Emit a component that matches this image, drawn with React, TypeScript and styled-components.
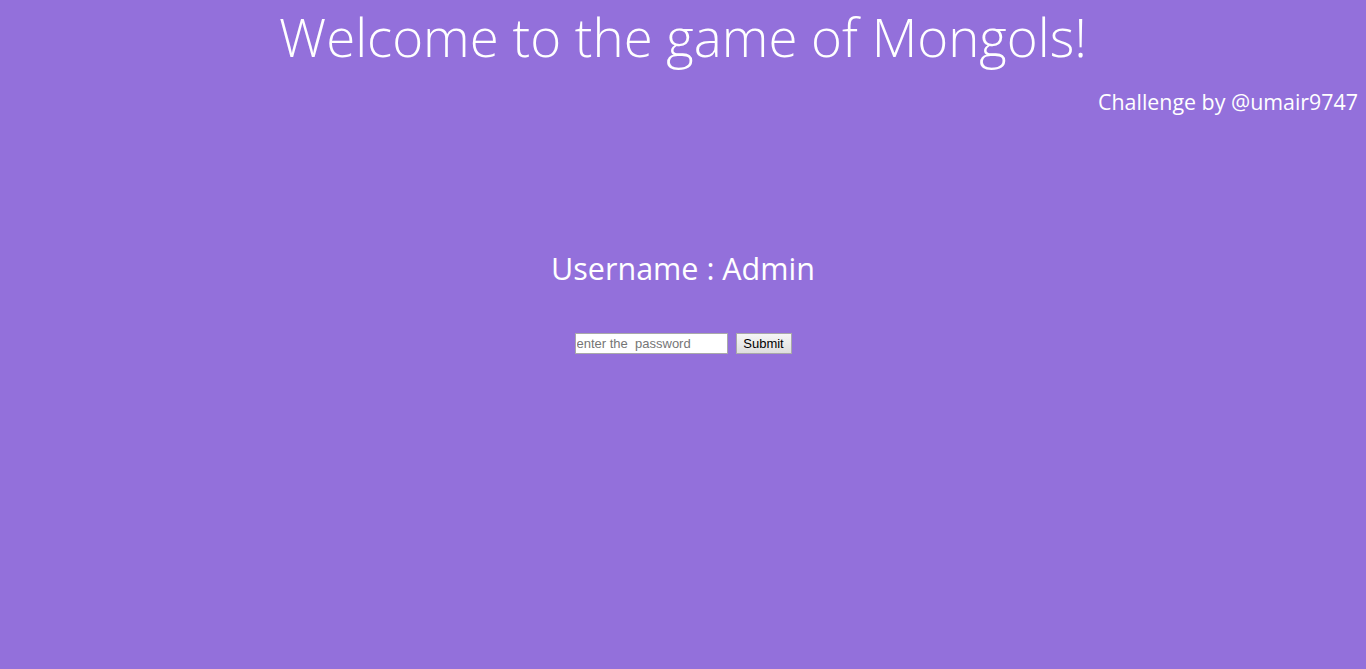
import React from "react";
import styled, { createGlobalStyle } from "styled-components";

const Global = createGlobalStyle`
  html, body { margin: 0; padding: 0; background: #9370db; }
  body { min-height: 669px; }
`;

const Page = styled.div`
  min-height: 669px;
  background: #9370db;
  color: #fff;
  font-family: "Open Sans", "Noto Sans", sans-serif;
  display: flex;
  flex-direction: column;
  padding: 0 8px;
  box-sizing: border-box;
`;

const Title = styled.h1`
  margin: 4px 0 0;
  font-size: 52.8px;
  font-weight: 300;
  line-height: 66px;
  text-align: center;
`;

const Credit = styled.div`
  margin-top: 18px;
  font-size: 21.4px;
  font-weight: 400;
  line-height: 28px;
  text-align: right;
`;

const Login = styled.div`
  margin-top: 130px;
  display: flex;
  flex-direction: column;
  align-items: center;
`;

const UserLine = styled.h2`
  margin: 0;
  font-size: 30.5px;
  font-weight: 400;
  line-height: 44px;
`;

const Form = styled.form`
  margin-top: 43px;
  display: flex;
  gap: 8px;
  align-items: center;
`;

const Input = styled.input`
  width: 153px;
  height: 21px;
  box-sizing: border-box;
  border: 1px solid #a9a9a9;
  padding: 1px 1px;
  font-family: "Liberation Sans", Arial, sans-serif;
  font-size: 13px;
  background: #fff;
  &::placeholder { color: #757575; }
`;

const Button = styled.button`
  width: 56px;
  height: 21px;
  box-sizing: border-box;
  border: 1px solid #a9a9a9;
  background: linear-gradient(#f6f6f6, #dedede);
  font-family: "Liberation Sans", Arial, sans-serif;
  font-size: 13px;
  color: #000;
  padding: 0;
`;

export default function App() {
  return (
    <>
      <Global />
      <Page>
        <Title>Welcome to the game of Mongols!</Title>
        <Credit>Challenge by @umair9747</Credit>
        <Login>
          <UserLine>Username : Admin</UserLine>
          <Form onSubmit={(e) => e.preventDefault()}>
            <Input type="password" placeholder="enter the  password" />
            <Button type="submit">Submit</Button>
          </Form>
        </Login>
      </Page>
    </>
  );
}
